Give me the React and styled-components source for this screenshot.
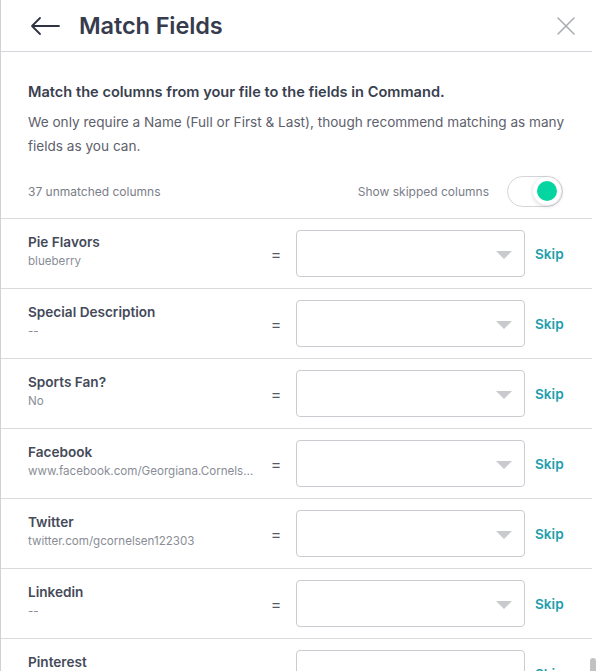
import React from "react";
import styled, { createGlobalStyle } from "styled-components";

const GlobalStyle = createGlobalStyle`
  html, body {
    margin: 0;
    padding: 0;
    height: 671px;
    overflow: hidden;
    background: #fff;
    font-family: Inter, "Noto Sans", "Liberation Sans", sans-serif;
  }
`;

const Panel = styled.div`
  position: relative;
  width: 596px;
  height: 671px;
  box-sizing: border-box;
  border-left: 1px solid #cfd3d8;
  overflow: hidden;
`;

const Header = styled.div`
  height: 52px;
  display: flex;
  align-items: center;
  padding: 0 16px 0 29px;
  border-bottom: 1px solid #d3d6da;
  width: 591px;
  box-sizing: border-box;
`;

const Title = styled.h1`
  margin: 0 0 0 19px;
  font-size: 23.5px;
  font-weight: 600;
  color: #363b4d;
  flex: 1;
  letter-spacing: -0.1px;
`;

const IconButton = styled.button`
  border: 0;
  background: none;
  padding: 0;
  display: flex;
  align-items: center;
  cursor: pointer;
`;

const Intro = styled.div`
  padding: 29px 20px 0 27px;
`;

const Lead = styled.p`
  margin: 0 0 7px;
  font-size: 14.6px;
  font-weight: 600;
  color: #3a3f4f;
  line-height: 22px;
`;

const Text = styled.p`
  margin: 0;
  font-size: 13.6px;
  line-height: 24px;
  color: #5d616c;
`;

const Bar = styled.div`
  display: flex;
  align-items: center;
  justify-content: space-between;
  padding: 18px 29px 11px 27px;
  width: 591px;
  box-sizing: border-box;
  border-bottom: 1px solid #d8dadd;
`;

const Small = styled.span`
  font-size: 12px;
  color: #7a7e88;
`;

const ToggleWrap = styled.div`
  display: flex;
  align-items: center;
  gap: 18px;
`;

const Toggle = styled.div`
  width: 56px;
  height: 31px;
  box-sizing: border-box;
  border: 1.5px solid #d4d5d9;
  border-radius: 16px;
  position: relative;
  background: #fff;
`;

const Knob = styled.div`
  position: absolute;
  right: 1px;
  top: 0px;
  width: 28px;
  height: 28px;
  border-radius: 50%;
  background: #fff;
  box-shadow: 0 1px 4px rgba(0, 0, 0, 0.18);
  display: flex;
  align-items: center;
  justify-content: center;
  &::after {
    content: "";
    width: 20px;
    height: 20px;
    border-radius: 50%;
    background: #05d5a0;
  }
`;

const Row = styled.div`
  height: 70px;
  width: 591px;
  box-sizing: border-box;
  border-bottom: 1px solid #d8dadd;
  display: flex;
  align-items: center;
  padding: 0 0 0 27px;
`;

const Field = styled.div`
  width: 228px;
  display: flex;
  flex-direction: column;
  gap: 4px;
  margin-top: -5px;
`;

const FieldName = styled.div`
  font-size: 13.6px;
  font-weight: 600;
  color: #454a59;
`;

const FieldValue = styled.div`
  max-width: 226px;
  font-size: 11.6px;
  color: #8a8d96;
  white-space: nowrap;
  overflow: hidden;
  text-overflow: ellipsis;
`;

const Equals = styled.div`
  width: 40px;
  font-size: 16px;
  color: #555a66;
  text-align: center;
`;

const Select = styled.div`
  width: 229px;
  height: 47px;
  box-sizing: border-box;
  border: 1px solid #c9ccd1;
  border-radius: 4px;
  position: relative;
  &::after {
    content: "";
    position: absolute;
    right: 12px;
    top: 20px;
    border-left: 8px solid transparent;
    border-right: 8px solid transparent;
    border-top: 8px solid #c9cacd;
  }
`;

const Skip = styled.button`
  border: 0;
  background: none;
  padding: 0;
  margin-left: 10px;
  font-family: inherit;
  font-size: 13.6px;
  font-weight: 600;
  color: #1e9eac;
  cursor: pointer;
`;

const Thumb = styled.div`
  position: absolute;
  right: 0;
  top: 658px;
  width: 6px;
  height: 40px;
  border-radius: 3px;
  background: #c2c2c2;
`;

const rows = [
  { name: "Pie Flavors", value: "blueberry" },
  { name: "Special Description", value: "--" },
  { name: "Sports Fan?", value: "No" },
  { name: "Facebook", value: "www.facebook.com/Georgiana.Cornelsen122303" },
  { name: "Twitter", value: "twitter.com/gcornelsen122303" },
  { name: "Linkedin", value: "--" },
  { name: "Pinterest", value: "--" },
];

export default function App() {
  return (
    <>
      <GlobalStyle />
      <Panel>
        <Header>
          <IconButton aria-label="Back">
            <svg width="30" height="20" viewBox="0 0 30 20" fill="none" stroke="#2f3442" strokeWidth="1.8" strokeLinecap="round" strokeLinejoin="round">
              <path d="M29 10H2M10 2 2 10l8 8" />
            </svg>
          </IconButton>
          <Title>Match Fields</Title>
          <IconButton aria-label="Close">
            <svg width="20" height="20" viewBox="0 0 20 20" fill="none" stroke="#a7aab0" strokeWidth="1.5" strokeLinecap="round">
              <path d="M2 2l16 16M18 2 2 18" />
            </svg>
          </IconButton>
        </Header>
        <Intro>
          <Lead>Match the columns from your file to the fields in Command.</Lead>
          <Text>
            We only require a Name (Full or First &amp; Last), though recommend matching as many
            fields as you can.
          </Text>
        </Intro>
        <Bar>
          <Small>37 unmatched columns</Small>
          <ToggleWrap>
            <Small>Show skipped columns</Small>
            <Toggle>
              <Knob />
            </Toggle>
          </ToggleWrap>
        </Bar>
        {rows.map((r) => (
          <Row key={r.name}>
            <Field>
              <FieldName>{r.name}</FieldName>
              <FieldValue>{r.value}</FieldValue>
            </Field>
            <Equals>=</Equals>
            <Select />
            <Skip>Skip</Skip>
          </Row>
        ))}
        <Thumb />
      </Panel>
    </>
  );
}
